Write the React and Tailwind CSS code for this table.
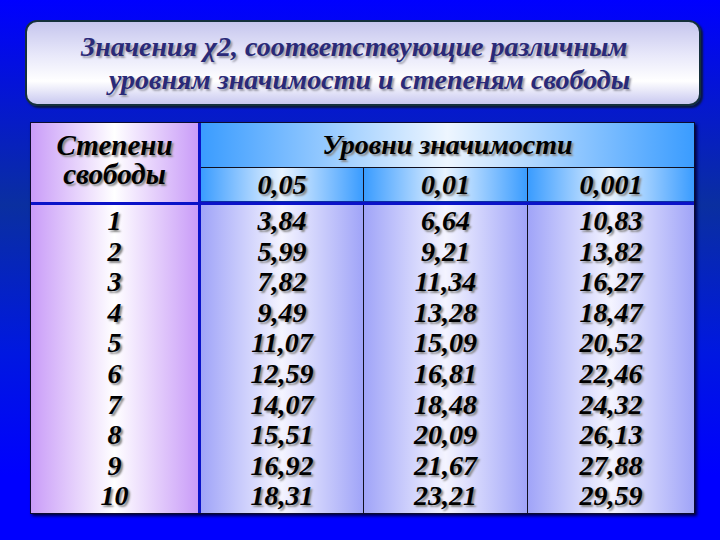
const rows = [
  ["1", "3,84", "6,64", "10,83"],
  ["2", "5,99", "9,21", "13,82"],
  ["3", "7,82", "11,34", "16,27"],
  ["4", "9,49", "13,28", "18,47"],
  ["5", "11,07", "15,09", "20,52"],
  ["6", "12,59", "16,81", "22,46"],
  ["7", "14,07", "18,48", "24,32"],
  ["8", "15,51", "20,09", "26,13"],
  ["9", "16,92", "21,67", "27,88"],
  ["10", "18,31", "23,21", "29,59"],
];

function BodyCol({ idx, className }) {
  return (
    <div className={"flex flex-col items-center pt-[1px] " + className}>
      {rows.map((r) => (
        <div
          key={r[0]}
          className="h-[30.6px] leading-[30.6px] text-[28px] font-bold italic text-black [text-shadow:2px_2px_2px_#888]"
        >
          {r[idx]}
        </div>
      ))}
    </div>
  );
}

export default function App() {
  return (
    <div className="font-['Liberation_Serif','Times_New_Roman',serif] w-[720px] h-[540px] overflow-hidden pt-[20px] bg-[linear-gradient(to_bottom,#0000ff_0%,#0a2fa0_38%,#0018e0_65%,#0000ff_88%,#0000ff_100%)]">
      <div className="ml-[25px] w-[676px] h-[86px] rounded-[12px] border-2 border-[#14303c] shadow-[2px_2px_2px_#0a1840] bg-[linear-gradient(to_bottom,#c6c6ee_0%,#e8e8fa_40%,#ffffff_72%,#c8c8f0_100%)] flex flex-col pt-[8px]">
        <div className="ml-[54px] h-[33px] leading-[33px] text-[28px] font-bold italic text-[#2a2a78] [text-shadow:2px_2px_2px_#9a9aa8]">
          Значения χ2, соответствующие различным
        </div>
        <div className="ml-[82px] h-[33px] leading-[33px] text-[28px] font-bold italic text-[#2a2a78] [text-shadow:2px_2px_2px_#9a9aa8]">
          уровням значимости и степеням свободы
        </div>
      </div>

      <div className="ml-[30px] mt-[16px] w-[665px] border border-[#0c0c30] shadow-[2px_2px_3px_#000040]">
        <div className="flex border-b-[3px] border-[#0a12c8]">
          <div className="w-[170px] h-[79px] border-r-[3px] border-[#0a12c8] bg-[linear-gradient(to_right,#c99cf8_0%,#ffffff_50%,#c99cf8_100%)] flex flex-col items-center justify-center pb-[6px]">
            <div className="h-[29px] leading-[29px] text-[29px] font-bold italic text-black [text-shadow:2px_2px_2px_#888]">
              Степени
            </div>
            <div className="h-[29px] leading-[29px] text-[29px] font-bold italic text-black [text-shadow:2px_2px_2px_#888]">
              свободы
            </div>
          </div>
          <div className="flex-1 flex flex-col">
            <div className="h-[45px] border-b border-[#101020] bg-[linear-gradient(to_right,#3a9cff_0%,#eef6ff_50%,#3a9cff_100%)] flex items-center justify-center">
              <span className="text-[28px] font-bold italic text-black [text-shadow:2px_2px_2px_#888]">
                Уровни значимости
              </span>
            </div>
            <div className="h-[33px] flex">
              <div className="w-[162px] bg-[linear-gradient(to_right,#3a9cff_0%,#e8f3ff_50%,#3a9cff_100%)] flex items-center justify-center text-[28px] font-bold italic text-black [text-shadow:2px_2px_2px_#888]">
                0,05
              </div>
              <div className="w-[164px] border-l border-[#101020] bg-[linear-gradient(to_right,#3a9cff_0%,#e8f3ff_50%,#3a9cff_100%)] flex items-center justify-center text-[28px] font-bold italic text-black [text-shadow:2px_2px_2px_#888]">
                0,01
              </div>
              <div className="flex-1 border-l border-[#101020] bg-[linear-gradient(to_right,#3a9cff_0%,#e8f3ff_50%,#3a9cff_100%)] flex items-center justify-center text-[28px] font-bold italic text-black [text-shadow:2px_2px_2px_#888]">
                0,001
              </div>
            </div>
          </div>
        </div>
        <div className="flex h-[308px]">
          <BodyCol
            idx={0}
            className="w-[170px] border-r-[3px] border-[#0a12c8] bg-[linear-gradient(to_right,#c99cf8_0%,#ffffff_50%,#c99cf8_100%)]"
          />
          <BodyCol
            idx={1}
            className="w-[162px] bg-[linear-gradient(to_right,#a0a4f8_0%,#f4f4ff_50%,#a0a4f8_100%)]"
          />
          <BodyCol
            idx={2}
            className="w-[164px] border-l border-[#101020] bg-[linear-gradient(to_right,#a0a4f8_0%,#f4f4ff_50%,#a0a4f8_100%)]"
          />
          <BodyCol
            idx={3}
            className="flex-1 border-l border-[#101020] bg-[linear-gradient(to_right,#a0a4f8_0%,#f4f4ff_50%,#a0a4f8_100%)]"
          />
        </div>
      </div>
    </div>
  );
}
